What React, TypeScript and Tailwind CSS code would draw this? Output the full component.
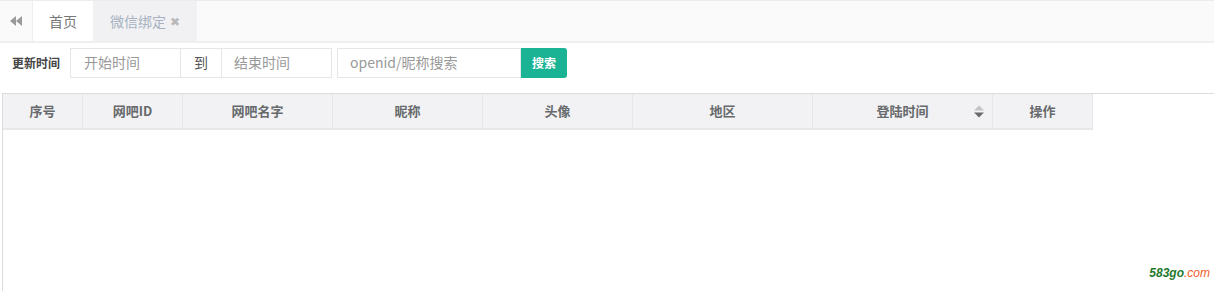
import React from 'react';

const COLUMNS = [
  { name: '序号', w: 'w-[80px]' },
  { name: '网吧ID', w: 'w-[100px]' },
  { name: '网吧名字', w: 'w-[150px]' },
  { name: '昵称', w: 'w-[150px]' },
  { name: '头像', w: 'w-[150px]' },
  { name: '地区', w: 'w-[180px]' },
  { name: '登陆时间', w: 'w-[180px]', sort: true },
  { name: '操作', w: 'w-[100px]' },
];

function BackwardIcon() {
  return (
    <svg width="12" height="10" viewBox="0 0 12 10" className="fill-[#9a9a9a]">
      <path d="M0 5 L6 0 L6 10 Z" />
      <path d="M6 5 L12 0 L12 10 Z" />
    </svg>
  );
}

function SortIcon() {
  return (
    <svg width="10" height="15" viewBox="0 0 10 15">
      <path d="M0 6.5 L5 1.5 L10 6.5 Z" fill="#c4c4c4" />
      <path d="M0 8.5 L10 8.5 L5 13.5 Z" fill="#6b6b6b" />
    </svg>
  );
}

export default function App() {
  return (
    <div
      className="relative h-[291px] w-[1214px] flex flex-col bg-white overflow-hidden"
      style={{ fontFamily: '"Noto Sans CJK SC", "Noto Sans", sans-serif' }}
    >
      {/* Tabs */}
      <div className="h-[43px] flex bg-[#fafafa] border-t border-[#ececec] border-b-2 border-b-[#efefef]">
        <div className="w-[33px] flex items-center justify-center border-r border-[#eee]">
          <BackwardIcon />
        </div>
        <div className="w-[60px] flex items-center justify-center bg-white text-[14px] text-[#777]">首页</div>
        <div className="w-[104px] flex items-center justify-center gap-1 bg-[#f1f1f3] text-[14px] text-[#a7b1c2]">
          微信绑定 <span className="text-[12px] text-[#b8b8b8]">✖</span>
        </div>
      </div>

      {/* Search */}
      <div className="flex items-center mt-[4px] pl-[12px] h-[31px]">
        <span className="text-[12px] font-bold text-[#444] mr-[10px]">更新时间</span>
        <div className="flex h-[30px] text-[14px]">
          <div className="w-[111px] border border-[#e5e6e7] flex items-center pl-[13px] text-[#999]">开始时间</div>
          <div className="w-[40px] border-y border-[#e5e6e7] flex items-center justify-center text-[#555]">到</div>
          <div className="w-[111px] border border-[#e5e6e7] flex items-center pl-[12px] text-[#999]">结束时间</div>
        </div>
        <div className="flex h-[30px] ml-[5px] text-[14px]">
          <div className="w-[184px] border border-[#e5e6e7] flex items-center pl-[12px] text-[#999]">openid/昵称搜索</div>
          <button className="w-[46px] bg-[#1ab394] text-white text-[12px] font-bold rounded-r-[3px]">搜索</button>
        </div>
      </div>

      {/* Table */}
      <div className="flex-1 mt-[15px] ml-[2px] border-t border-l border-[#dcdcdc]">
        <div className="flex h-[36px] border-b-2 border-[#e7e7e7] w-fit bg-[#f2f2f4]">
          {COLUMNS.map((c) => (
            <div
              key={c.name}
              className={`${c.w} relative flex items-center justify-center border-r border-[#e7e7e7] text-[13px] font-bold text-[#676a6c]`}
            >
              {c.name}
              {c.sort && (
                <span className="absolute right-[8px] top-[10px]">
                  <SortIcon />
                </span>
              )}
            </div>
          ))}
        </div>
      </div>

      {/* watermark */}
      <div
        className="absolute right-[4px] bottom-[9px] text-[12px] font-bold italic"
        style={{ fontFamily: '"Liberation Sans", sans-serif' }}
      >
        <span className="text-[#1f7a2e]">583go</span>
        <span className="text-[#f05a28] font-normal">.com</span>
      </div>
    </div>
  );
}
